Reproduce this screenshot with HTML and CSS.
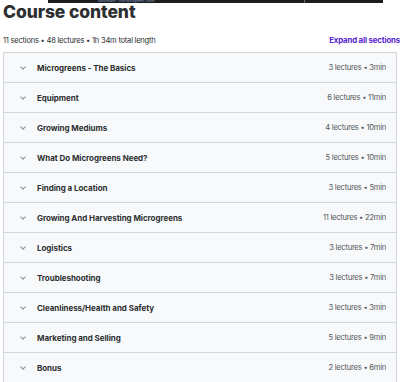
FILE: index.html
```html
<!DOCTYPE html>
<html lang="en">
<head>
    <meta charset="UTF-8">
    <title>Course content</title>
    <link rel="stylesheet" href="styles.css">
</head>
<body>
    <!-- bout du lecteur vidéo coupé en haut -->
    <div class="player-strip">
        <div class="player-bar">Marketplace · Grow Microgreens Online</div>
        <div class="player-end"></div>
    </div>

    <h2 class="title">Course content</h2>

    <div class="summary">
        <span>11 sections • 48 lectures • 1h 34m total length</span>
        <button class="expand">Expand all sections</button>
    </div>

    <div class="sections">
        <div class="section"><span class="chev"></span><span class="name">Microgreens - The Basics</span><span class="meta">3 lectures • 3min</span></div>
        <div class="section"><span class="chev"></span><span class="name">Equipment</span><span class="meta">6 lectures • 11min</span></div>
        <div class="section"><span class="chev"></span><span class="name">Growing Mediums</span><span class="meta">4 lectures • 10min</span></div>
        <div class="section"><span class="chev"></span><span class="name">What Do Microgreens Need?</span><span class="meta">5 lectures • 10min</span></div>
        <div class="section"><span class="chev"></span><span class="name">Finding a Location</span><span class="meta">3 lectures • 5min</span></div>
        <div class="section"><span class="chev"></span><span class="name">Growing And Harvesting Microgreens</span><span class="meta">11 lectures • 22min</span></div>
        <div class="section"><span class="chev"></span><span class="name">Logistics</span><span class="meta">3 lectures • 7min</span></div>
        <div class="section"><span class="chev"></span><span class="name">Troubleshooting</span><span class="meta">3 lectures • 7min</span></div>
        <div class="section"><span class="chev"></span><span class="name">Cleanliness/Health and Safety</span><span class="meta">3 lectures • 3min</span></div>
        <div class="section"><span class="chev"></span><span class="name">Marketing and Selling</span><span class="meta">5 lectures • 9min</span></div>
        <div class="section"><span class="chev"></span><span class="name">Bonus</span><span class="meta">2 lectures • 6min</span></div>
    </div>
</body>
</html>
```

FILE: styles.css
```css
body {
    margin: 0;
    padding: 0 0 0 3px;
    font-family: "Inter", "Noto Sans", sans-serif;
    color: #2d2f31;
    background: #fff;
    overflow: hidden;
}

.player-strip {
    display: flex;
    margin-left: 45px;
    width: 335px;
    height: 3px;
    overflow: hidden;
}

.player-bar {
    flex: 1;
    background: #1c1d1f;
    border-right: 1px solid #6a6f73;
    font-size: 3px;
    line-height: 3px;
    color: #8fa0c8;
    padding-left: 50px;
    white-space: nowrap;
    overflow: hidden;
}

.player-end {
    width: 78px;
    background: #1c1d1f;
}

.title {
    margin: 0;
    font-size: 17.5px;
    font-weight: 800;
    line-height: 18px;
    letter-spacing: -0.1px;
}

.summary {
    display: flex;
    justify-content: space-between;
    align-items: center;
    margin-top: 10px;
    height: 18px;
    font-size: 7.6px;
    letter-spacing: -0.25px;
}

.expand {
    background: none;
    border: none;
    padding: 0;
    margin-right: 0;
    font-family: inherit;
    font-size: 7.8px;
    font-weight: 700;
    color: #5624d0;
    letter-spacing: -0.15px;
}

.sections {
    margin-top: 3px;
    margin-right: 3px;
    border: 1px solid #d1d7dc;
    border-bottom: none;
}

.section {
    display: flex;
    align-items: center;
    height: 29px;
    padding: 0 10px 0 17px;
    background: #f7f9fa;
    border-bottom: 1px solid #d1d7dc;
}

.chev {
    width: 3px;
    height: 3px;
    border-right: 1px solid #8a8f93;
    border-bottom: 1px solid #8a8f93;
    transform: rotate(45deg);
    margin: -2px 12px 0 0;
}

.name {
    flex: 1;
    font-size: 8px;
    font-weight: 700;
    letter-spacing: -0.05px;
}

.meta {
    font-size: 7.6px;
    color: #55585b;
    letter-spacing: -0.25px;
}
```
